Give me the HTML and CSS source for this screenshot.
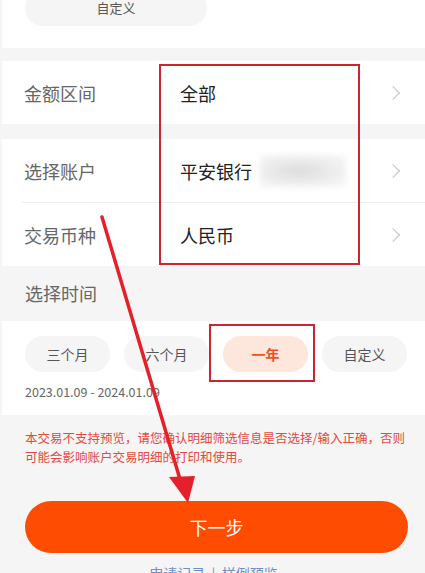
FILE: index.html
```html
<!DOCTYPE html>
<html>
<head>
  <meta charset="UTF-8">
  <title>明细筛选</title>
  <link rel="stylesheet" href="styles.css">
</head>
<body>
  <div class="page">
    <div class="card top-card">
      <div class="chip chip-top">自定义</div>
    </div>

    <div class="card">
      <div class="row">
        <span class="label">金额区间</span>
        <span class="value">全部</span>
        <span class="chev"></span>
      </div>
    </div>

    <div class="card card-gap">
      <div class="row">
        <span class="label">选择账户</span>
        <span class="value">平安银行<span class="blur"></span></span>
        <span class="chev"></span>
      </div>
      <div class="row row-line">
        <span class="label">交易币种</span>
        <span class="value">人民币</span>
        <span class="chev"></span>
      </div>
    </div>

    <div class="section-title">选择时间</div>

    <div class="card time-card">
      <div class="chips">
        <div class="chip">三个月</div>
        <div class="chip">六个月</div>
        <div class="chip active">一年</div>
        <div class="chip">自定义</div>
      </div>
      <div class="date">2023.01.09 - 2024.01.09</div>
    </div>

    <p class="warn">本交易不支持预览，请您确认明细筛选信息是否选择/输入正确，否则<br>可能会影响账户交易明细的打印和使用。</p>

    <button class="btn">下一步</button>

    <div class="links">申请记录 &nbsp;|&nbsp; 样例预览</div>
  </div>

  <!-- 标注 -->
  <div class="mark mark-values"></div>
  <div class="mark mark-year"></div>
  <svg class="arrow" width="425" height="573" viewBox="0 0 425 573">
    <line x1="102" y1="217" x2="182" y2="486" stroke="#e5202a" stroke-width="3.5" stroke-linecap="round"/>
    <polygon points="169,477 195,476 188,503" fill="#e5202a"/>
  </svg>
</body>
</html>
```

FILE: styles.css
```css
html, body {
  margin: 0;
  padding: 0;
}
body {
  font-family: "Noto Sans CJK SC", "Noto Sans", sans-serif;
  background-color: #f5f5f5;
  width: 425px;
  height: 573px;
  overflow: hidden;
  position: relative;
  color: #222;
}
.page {
  margin-left: 2px;
}
.card {
  background-color: #fff;
}
.top-card {
  display: flow-root;
  height: 48px;
  margin-bottom: 13px;
  padding-left: 23px;
}
.chip {
  height: 36px;
  line-height: 36px;
  border-radius: 18px;
  background-color: #f5f5f5;
  color: #555;
  font-size: 13px;
  text-align: center;
}
.chip-top {
  width: 182px;
  margin-top: -10px;
}
.row {
  display: flex;
  align-items: center;
  height: 63px;
  padding-left: 22px;
}
.card-gap {
  margin-top: 15px;
}
.row-line {
  border-top: 1px solid #eee;
  margin-left: 20px;
  padding-left: 2px;
}
.label {
  width: 156px;
  font-size: 18px;
  color: #666;
}
.value {
  flex: 1;
  display: flex;
  align-items: center;
  font-size: 18px;
  color: #222;
}
.blur {
  display: inline-block;
  width: 86px;
  height: 32px;
  margin-left: 8px;
  background: radial-gradient(ellipse at 45% 50%, #dcdcdc 0%, #ececec 50%, #f9f9f9 100%);
  filter: blur(3px);
}
.chev {
  width: 9px;
  height: 9px;
  border-top: 1.5px solid #c4c4c4;
  border-right: 1.5px solid #c4c4c4;
  transform: rotate(45deg);
  margin-right: 27px;
}
.section-title {
  height: 55px;
  line-height: 55px;
  padding-left: 23px;
  font-size: 18px;
  color: #666;
}
.time-card {
  padding: 15px 16px 14px 23px;
}
.chips {
  display: grid;
  grid-template-columns: repeat(4, 85px);
  column-gap: 14px;
}
.chips .chip {
  font-size: 14px;
}
.chip.active {
  background-color: #fde6dc;
  color: #f0501e;
  font-weight: bold;
}
.date {
  margin-top: 10px;
  font-size: 12.5px;
  color: #666;
}
.warn {
  margin: 13px 0 0 23px;
  font-size: 12.5px;
  line-height: 19px;
  color: #e34a3c;
}
.btn {
  display: block;
  width: 383px;
  height: 52px;
  margin: 35px 0 0 23px;
  border: none;
  border-radius: 26px;
  background-color: #fe4d02;
  color: #fff;
  font-family: inherit;
  font-size: 18px;
}
.links {
  margin-top: 10px;
  text-align: center;
  font-size: 14px;
  color: #6f8fc4;
}
.mark {
  position: absolute;
  border: 2px solid #cc2530;
}
.mark-values {
  left: 159px;
  top: 64px;
  width: 197px;
  height: 197px;
}
.mark-year {
  left: 209px;
  top: 324px;
  width: 102px;
  height: 54px;
}
.arrow {
  position: absolute;
  left: 0;
  top: 0;
}
```
